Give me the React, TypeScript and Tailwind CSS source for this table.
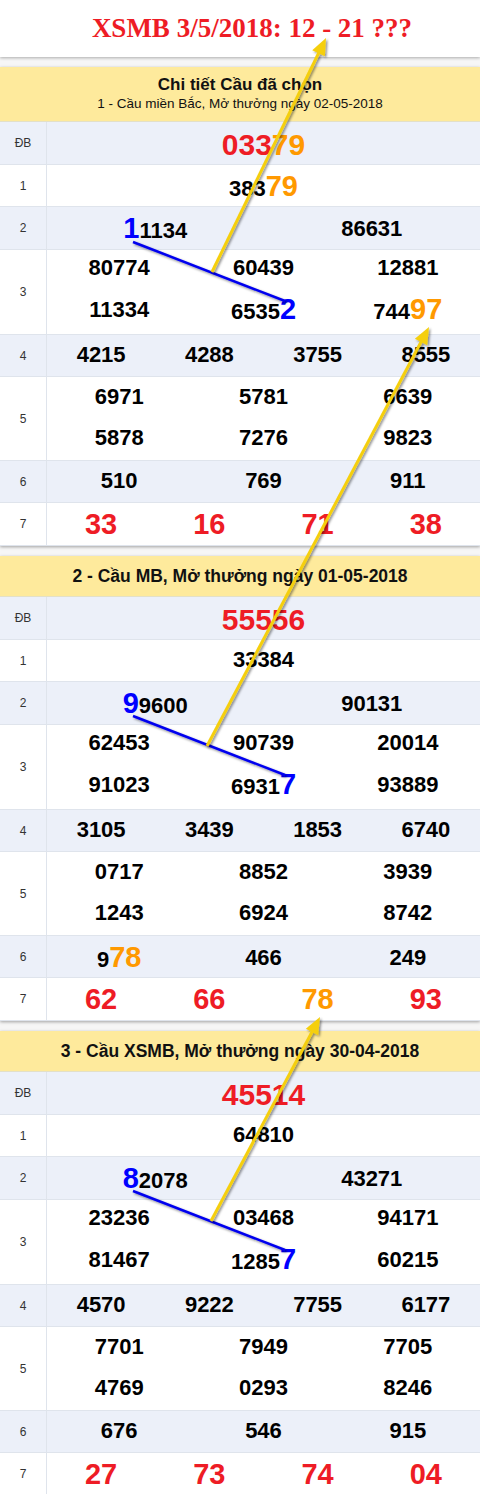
import React from 'react';

type Row = { label: string; h: string; lines: string[][]; kind?: 'db' | 'g7' };
type Section = { title: React.ReactNode; headH: string; rows: Row[] };

const sections: Section[] = [
  {
    headH: 'h-[55px]',
    title: (
      <>
        <div className="text-[17px] font-bold leading-[20px]">Chi tiết Cầu đã chọn</div>
        <div className="text-[13.5px] leading-[18px]">1 - Cầu miền Bắc, Mở thưởng ngày 02-05-2018</div>
      </>
    ),
    rows: [
      { label: 'ĐB', h: 'h-[43px]', kind: 'db', lines: [['033{79}']] },
      { label: '1', h: 'h-[42px]', lines: [['383{79}']] },
      { label: '2', h: 'h-[43px]', lines: [['<1>1134', '86631']] },
      { label: '3', h: 'h-[85px]', lines: [['80774', '60439', '12881'], ['11334', '6535<2>', '744{97}']] },
      { label: '4', h: 'h-[42px]', lines: [['4215', '4288', '3755', '8555']] },
      { label: '5', h: 'h-[84px]', lines: [['6971', '5781', '6639'], ['5878', '7276', '9823']] },
      { label: '6', h: 'h-[42px]', lines: [['510', '769', '911']] },
      { label: '7', h: 'h-[43px]', kind: 'g7', lines: [['33', '16', '71', '38']] },
    ],
  },
  {
    headH: 'h-[41px]',
    title: <div className="text-[17.5px] font-bold">2 - Cầu MB, Mở thưởng ngày 01-05-2018</div>,
    rows: [
      { label: 'ĐB', h: 'h-[43px]', kind: 'db', lines: [['55556']] },
      { label: '1', h: 'h-[42px]', lines: [['33384']] },
      { label: '2', h: 'h-[43px]', lines: [['<9>9600', '90131']] },
      { label: '3', h: 'h-[85px]', lines: [['62453', '90739', '20014'], ['91023', '6931<7>', '93889']] },
      { label: '4', h: 'h-[42px]', lines: [['3105', '3439', '1853', '6740']] },
      { label: '5', h: 'h-[84px]', lines: [['0717', '8852', '3939'], ['1243', '6924', '8742']] },
      { label: '6', h: 'h-[42px]', lines: [['9{78}', '466', '249']] },
      { label: '7', h: 'h-[43px]', kind: 'g7', lines: [['62', '66', '{78}', '93']] },
    ],
  },
  {
    headH: 'h-[41px]',
    title: <div className="text-[17.5px] font-bold">3 - Cầu XSMB, Mở thưởng ngày 30-04-2018</div>,
    rows: [
      { label: 'ĐB', h: 'h-[43px]', kind: 'db', lines: [['45514']] },
      { label: '1', h: 'h-[42px]', lines: [['64810']] },
      { label: '2', h: 'h-[43px]', lines: [['<8>2078', '43271']] },
      { label: '3', h: 'h-[85px]', lines: [['23236', '03468', '94171'], ['81467', '1285<7>', '60215']] },
      { label: '4', h: 'h-[42px]', lines: [['4570', '9222', '7755', '6177']] },
      { label: '5', h: 'h-[84px]', lines: [['7701', '7949', '7705'], ['4769', '0293', '8246']] },
      { label: '6', h: 'h-[42px]', lines: [['676', '546', '915']] },
      { label: '7', h: 'h-[43px]', kind: 'g7', lines: [['27', '73', '74', '04']] },
    ],
  },
];

const cols: Record<number, string> = {
  1: 'grid-cols-1',
  2: 'grid-cols-2',
  3: 'grid-cols-3',
  4: 'grid-cols-4',
};

function Cell({ text, kind }: { text: string; kind?: string }) {
  const base =
    kind === 'db'
      ? 'text-[30px] text-[#ee1c25]'
      : kind === 'g7'
        ? 'text-[29px] text-[#ee1c25]'
        : 'text-[22px] text-black pb-[3px]';
  const parts = text.split(/(\{[^}]*\}|<[^>]*>)/).filter(Boolean);
  return (
    <div className={`flex items-center justify-center font-bold ${base}`}>
      <span>
        {parts.map((p, i) => {
          if (p.startsWith('{'))
            return (
              <span key={i} className={`text-[#ff9900] ${kind ? '' : 'text-[29px]'}`}>
                {p.slice(1, -1)}
              </span>
            );
          if (p.startsWith('<'))
            return (
              <span key={i} className="text-[29px] text-[#0000ff]">
                {p.slice(1, -1)}
              </span>
            );
          return <span key={i}>{p}</span>;
        })}
      </span>
    </div>
  );
}

function Table({ s }: { s: Section }) {
  return (
    <div className="bg-white shadow-[0_1px_3px_rgba(0,0,0,0.35)]">
      <div className={`${s.headH} flex flex-col items-center justify-center bg-[#feea9c] text-[#111] border-b border-[#e3e0c8]`}>
        {s.title}
      </div>
      {s.rows.map((r, i) => (
        <div
          key={r.label}
          className={`${r.h} flex border-b border-[#dfe4ec] ${i % 2 === 0 ? 'bg-[#ecf0f9]' : 'bg-white'}`}
        >
          <div className="w-[47px] shrink-0 border-r border-[#dfe4ec] flex items-center justify-center text-[12px] text-[#333]">
            {r.label}
          </div>
          <div className="flex-1 flex flex-col">
            {r.lines.map((line, j) => (
              <div key={j} className={`flex-1 grid ${cols[line.length]}`}>
                {line.map((c, k) => (
                  <Cell key={k} text={c} kind={r.kind} />
                ))}
              </div>
            ))}
          </div>
        </div>
      ))}
    </div>
  );
}

function Arrow({ x1, y1, x2, y2 }: { x1: number; y1: number; x2: number; y2: number }) {
  const dx = x2 - x1;
  const dy = y2 - y1;
  const len = Math.hypot(dx, dy);
  const ux = dx / len;
  const uy = dy / len;
  const L = 17;
  const W = 7;
  const bx = x2 - ux * L;
  const by = y2 - uy * L;
  const pts = `${x2},${y2} ${bx - uy * W},${by + ux * W} ${bx + uy * W},${by - ux * W}`;
  return (
    <g filter="url(#sh)">
      <line x1={x1} y1={y1} x2={bx + ux * 2} y2={by + uy * 2} stroke="#f5cf0c" strokeWidth={3} />
      <polygon points={pts} fill="#f5cf0c" />
    </g>
  );
}

function Blue({ x1, y1, x2, y2 }: { x1: number; y1: number; x2: number; y2: number }) {
  return <line x1={x1} y1={y1} x2={x2} y2={y2} stroke="#0000ee" strokeWidth={2.5} filter="url(#sh)" />;
}

export default function App() {
  return (
    <div className="relative w-[480px] h-[1494px] overflow-hidden bg-[#f6f6f6] font-['Liberation_Sans',Arial,sans-serif]">
      <div className="h-[57px] bg-white shadow-[0_1px_3px_rgba(0,0,0,0.3)] flex items-center justify-center pl-6">
        <h1 className="font-['Liberation_Serif','Times_New_Roman',serif] font-bold text-[27px] text-[#ee1c25]">
          XSMB 3/5/2018: 12 - 21 ???
        </h1>
      </div>
      <div className="flex flex-col gap-[10px] mt-[10px]">
        {sections.map((s, i) => (
          <Table key={i} s={s} />
        ))}
      </div>

      <svg className="absolute inset-0 pointer-events-none" width="480" height="1494">
        <defs>
          <filter id="sh" x="-20%" y="-20%" width="140%" height="140%">
            <feDropShadow dx="1.5" dy="1.5" stdDeviation="1.2" floodColor="#000" floodOpacity="0.45" />
          </filter>
        </defs>
        <Blue x1={133} y1={242} x2={285} y2={301} />
        <Blue x1={133} y1={716} x2={285} y2={775} />
        <Blue x1={133} y1={1191} x2={285} y2={1250} />
        <Arrow x1={212} y1={272} x2={326} y2={38} />
        <Arrow x1={207} y1={746} x2={429} y2={327} />
        <Arrow x1={211} y1={1221} x2={320} y2={1017} />
      </svg>
    </div>
  );
}
